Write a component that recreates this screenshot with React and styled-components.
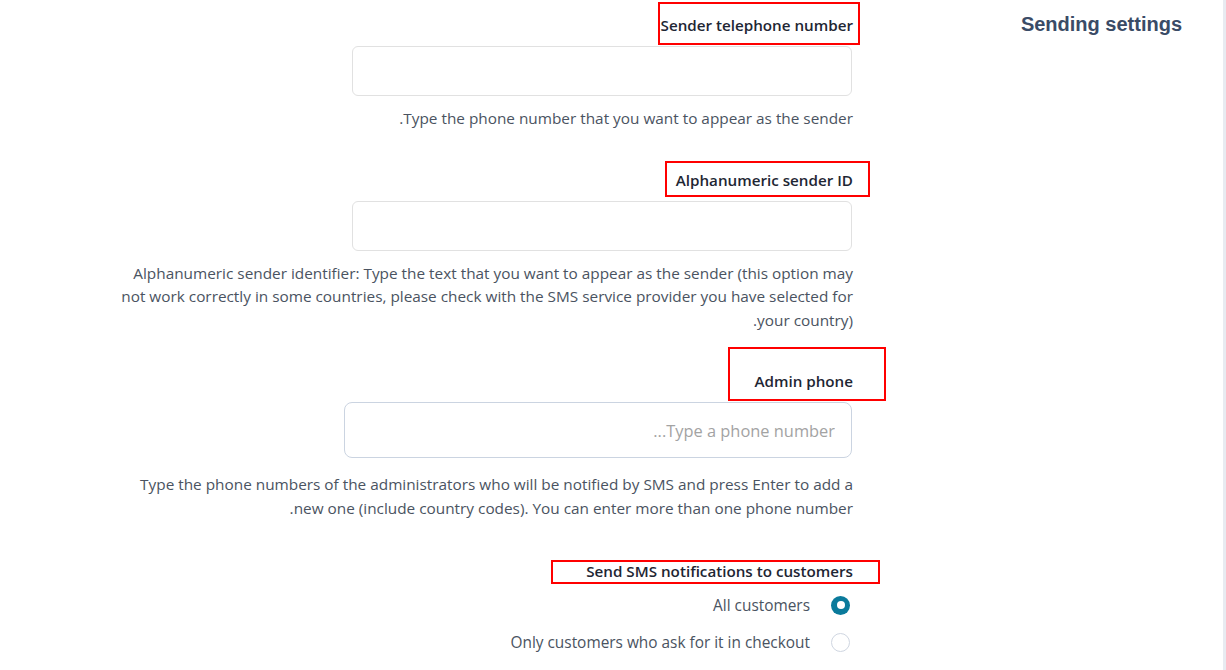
import React from "react";
import styled, { createGlobalStyle } from "styled-components";

const GlobalStyle = createGlobalStyle`
  * {
    box-sizing: border-box;
  }

  body {
    margin: 0;
    background: #ffffff;
    font-family: "Open Sans", "Noto Sans", sans-serif;
  }
`;

const FIELDS = [
  {
    label: "Sender telephone number",
    mark: { top: 13, right: 7, bottom: 10, left: 3 },
    help: [".Type the phone number that you want to appear as the sender"],
  },
  {
    label: "Alphanumeric sender ID",
    mark: { top: 9, right: 17, bottom: 7, left: 11 },
    help: [
      "Alphanumeric sender identifier: Type the text that you want to appear as the sender (this option may",
      "not work correctly in some countries, please check with the SMS service provider you have selected for",
      ".your country)",
    ],
  },
];

const App = () => {
  return (
    <>
      <GlobalStyle />
      <Page>
        <Main>
          {FIELDS.map((field) => (
            <Field key={field.label} $space={39}>
              <Label>
                {field.label}
                <Mark {...field.mark} />
              </Label>
              <TextInput type="text" />
              <Help $gap={11}>
                {field.help.map((line, i) => (
                  <React.Fragment key={i}>
                    {i > 0 && <br />}
                    {line}
                  </React.Fragment>
                ))}
              </Help>
            </Field>
          ))}

          <Field $space={41}>
            <Label>
              Admin phone
              <Mark top={24} right={33} bottom={10} left={26} />
            </Label>
            <TextInput
              type="text"
              placeholder="...Type a phone number"
              $width={508}
              $height={56}
              $tall
            />
            <Help $gap={15}>
              Type the phone numbers of the administrators who will be notified by SMS and press Enter to add a
              <br />
              .new one (include country codes). You can enter more than one phone number
            </Help>
          </Field>

          <Field>
            <Label>
              Send SMS notifications to customers
              <Mark top={1} right={27} bottom={3} left={35} />
            </Label>
            <RadioList>
              <RadioRow>
                All customers
                <Radio $checked />
              </RadioRow>
              <RadioRow>
                Only customers who ask for it in checkout
                <Radio />
              </RadioRow>
            </RadioList>
          </Field>
        </Main>

        <Aside>
          <Heading>Sending settings</Heading>
        </Aside>
        <Edge />
      </Page>
    </>
  );
};

export default App;

const Page = styled.div`
  display: flex;
  width: 1226px;
  height: 670px;
  overflow: hidden;
`;

const Main = styled.div`
  width: 853px;
  display: flex;
  flex-direction: column;
  align-items: flex-end;
  padding-top: 15px;
`;

const Aside = styled.div`
  flex: 1;
  padding: 12px 41px 0 0;
  text-align: right;
`;

const Edge = styled.div`
  width: 3px;
  background: #e8ebf1;
`;

const Heading = styled.h2`
  margin: 0;
  font-family: "Liberation Sans", Arial, sans-serif;
  font-size: 20px;
  line-height: 24px;
  font-weight: 700;
  color: #3a4b66;
`;

const Field = styled.div`
  display: flex;
  flex-direction: column;
  align-items: flex-end;
  padding-bottom: ${(p) => p.$space || 40}px;
`;

const Label = styled.label`
  position: relative;
  display: inline-block;
  font-size: 15.2px;
  line-height: 20px;
  font-weight: 600;
  color: #1e2633;
  margin-bottom: 11px;
  white-space: nowrap;
`;

const Mark = styled.span`
  position: absolute;
  top: -${(p) => p.top}px;
  right: -${(p) => p.right}px;
  bottom: -${(p) => p.bottom}px;
  left: -${(p) => p.left}px;
  border: 2px solid #ff0000;
  pointer-events: none;
`;

const TextInput = styled.input`
  display: block;
  width: ${(p) => p.$width || 500}px;
  height: ${(p) => p.$height || 50}px;
  margin-right: 1px;
  border: 1px solid ${(p) => (p.$tall ? "#cbd4e1" : "#e1e1e1")};
  border-radius: ${(p) => (p.$tall ? 8 : 6)}px;
  background: #ffffff;
  padding: 0 16px;
  text-align: right;
  font-family: inherit;
  font-size: 16.4px;
  outline: none;

  &::placeholder {
    color: #a3a3a3;
  }
`;

const Help = styled.p`
  margin: ${(p) => p.$gap || 10}px 0 0;
  font-size: 15.35px;
  line-height: 23.5px;
  color: #4a5361;
  text-align: right;
  white-space: nowrap;
`;

const RadioList = styled.div`
  display: flex;
  flex-direction: column;
  align-items: flex-end;
  gap: 11px;
`;

const RadioRow = styled.label`
  display: flex;
  align-items: center;
  gap: 21px;
  height: 26px;
  padding-right: 3px;
  font-size: 15.4px;
  color: #4a5361;
`;

const Radio = styled.span`
  width: 19px;
  height: 19px;
  border-radius: 50%;
  background: ${(p) => (p.$checked ? "#0a7a9b" : "#ffffff")};
  border: ${(p) => (p.$checked ? "none" : "1.5px solid #cfd6e1")};
  display: flex;
  align-items: center;
  justify-content: center;

  &::after {
    content: "";
    display: ${(p) => (p.$checked ? "block" : "none")};
    width: 8px;
    height: 8px;
    border-radius: 50%;
    background: #ffffff;
  }
`;
